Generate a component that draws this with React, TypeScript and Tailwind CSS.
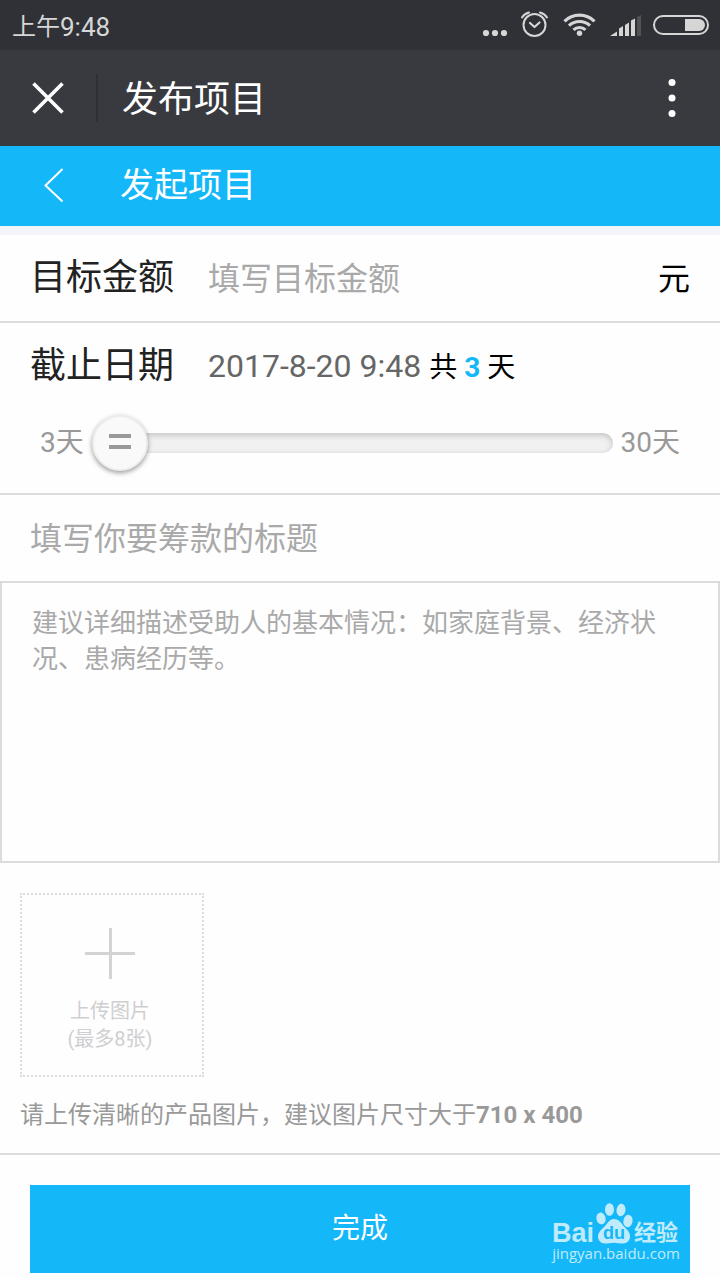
import { useState } from "react";

function StatusIcons() {
  return (
    <div className="flex items-center text-[#d6d6d6]">
      <svg width="228" height="32" viewBox="482 9 228 32" fill="currentColor" aria-hidden="true">
        <circle cx="486" cy="33" r="3.1" />
        <circle cx="495" cy="33" r="3.1" />
        <circle cx="504" cy="33" r="3.1" />
        <g fill="none" stroke="currentColor" strokeWidth="2" strokeLinecap="round" strokeLinejoin="round">
          <circle cx="534.5" cy="25" r="11" />
          <path d="M530 23l4.5 4 5-4.5" strokeWidth="2.2" />
          <path d="M522 17.500c1.500-2.500 4-4.300 7-5M547 17.500c-1.500-2.500-4-4.300-7-5" />
        </g>
        <g fill="none" stroke="currentColor" strokeWidth="3.200">
          <path d="M564.500 21.300c8.300-8.200 21.700-8.200 30 0" />
          <path d="M569 25.700c5.800-5.600 15.200-5.600 21 0" />
          <path d="M573.500 29.900c3.400-3.200 8.600-3.200 12 0" />
        </g>
        <circle cx="579.500" cy="33.300" r="2.700" />
        <path d="M610 36l7-4.500V36zM619 36v-7.500l4-2.500V36zM625 36V25l4-2.500V36zM631 36V20.500l4-2V36z" />
        <path d="M637 36V17l4-2v21z" opacity="0.2" />
        <rect x="654" y="16" width="54" height="18" rx="9" fill="none" stroke="currentColor" strokeWidth="2" />
        <path d="M685 19h14a6 6 0 0 1 0 12h-14z" />
      </svg>
    </div>
  );
}

function Watermark() {
  return (
    <span className="pointer-events-none absolute right-[10px] bottom-3 flex flex-col text-[#c0ebfd]" aria-hidden="true">
      <svg width="128" height="44" viewBox="552 1201 128 44" fill="currentColor" overflow="visible">
        <text x="552" y="1242" fontSize="27" fontWeight="700" fontFamily="Liberation Sans, sans-serif">Bai</text>
        <ellipse cx="601" cy="1218.500" rx="4.600" ry="6" transform="rotate(-12 601 1218.500)" />
        <ellipse cx="609.500" cy="1209.500" rx="4.500" ry="6.300" />
        <ellipse cx="621" cy="1210" rx="4.500" ry="6.300" transform="rotate(8 621 1210)" />
        <ellipse cx="628" cy="1221" rx="4.600" ry="6.200" transform="rotate(10 628 1221)" />
        <path d="M614 1219c5 0 7 4 10 7.500 4 4 6 6 6 10 0 4-3 7-7 7-3 0-6-.8-9-.8s-6 .8-9 .8c-4 0-7-3-7-7 0-4 3-6.500 7-10.500 3-3.500 5-7 9-7z" />
        <text x="614" y="1239" fontSize="18" fontWeight="700" textAnchor="middle" fill="#14b7f8" fontFamily="Liberation Sans, sans-serif">du</text>
        <text x="634" y="1240" fontSize="22" fontWeight="700" fontFamily="Noto Sans CJK SC, sans-serif">经验</text>
      </svg>
      <span className="font-['Open_Sans',sans-serif] text-[15px] leading-4">jingyan.baidu.com</span>
    </span>
  );
}

export default function App() {
  const [days, setDays] = useState(3);
  const end = new Date(2017, 7, 17 + days);
  const endText = `${end.getFullYear()}-${end.getMonth() + 1}-${end.getDate()} 9:48`;

  return (
    <div className="flex flex-col bg-[#fefefe] font-['Roboto','Noto_Sans_CJK_SC',sans-serif] text-black">
      <div className="flex h-[50px] items-center justify-between bg-[#303136] pr-2.5 pl-3 text-[#d6d6d6]">
        <div className="flex items-center pt-1 text-[26px] leading-8">
          <span className="text-2xl">上午</span>
          <span>9:48</span>
        </div>
        <StatusIcons />
      </div>

      <header className="flex h-24 items-center bg-[#393a3f] text-white">
        <button type="button" aria-label="关闭" className="flex h-12 w-[98px] items-center border-r-2 border-[#2f3034] pl-8">
          <svg width="32" height="32" viewBox="0 0 32 32" fill="none" stroke="currentColor" strokeWidth="3.600" aria-hidden="true">
            <path d="M1.500 1.500l29 29M30.500 1.500l-29 29" />
          </svg>
        </button>
        <h1 className="grow pt-1 pl-6 text-4xl">发布项目</h1>
        <button type="button" aria-label="更多" className="flex h-12 w-24 items-center justify-center">
          <svg width="8" height="40" viewBox="0 0 8 40" fill="currentColor" aria-hidden="true">
            <circle cx="4" cy="4.500" r="3.500" />
            <circle cx="4" cy="20" r="3.500" />
            <circle cx="4" cy="35.500" r="3.500" />
          </svg>
        </button>
      </header>

      <nav className="flex h-20 items-center bg-[#14b7f8] text-white">
        <button type="button" aria-label="返回" className="flex h-full w-[120px] items-center pl-11">
          <svg width="20" height="36" viewBox="0 0 20 36" fill="none" stroke="currentColor" strokeWidth="2" aria-hidden="true">
            <path d="M18.500 1L1.500 17.500l17 16" />
          </svg>
        </button>
        <h2 className="pb-0.5 text-[34px] leading-10">发起项目</h2>
      </nav>

      <form className="border-t-[9px] border-[#f3f5fa]" onSubmit={(e) => e.preventDefault()}>
        <div className="flex h-[88px] items-center border-b-2 border-[#dcdcdc] px-[30px]">
          <label htmlFor="amount" className="w-[178px] shrink-0 text-4xl text-[#222]">目标金额</label>
          <input id="amount" type="text" placeholder="填写目标金额" className="min-w-0 grow bg-transparent pt-0.5 text-[32px] leading-10 outline-none placeholder:text-[#a9a9a9]" />
          <span className="pt-0.5 text-[32px] leading-10">元</span>
        </div>

        <section className="h-[172px] border-b-2 border-[#dcdcdc]">
          <div className="flex h-[84px] items-center px-[30px] pt-0.5">
            <label htmlFor="days" className="w-[178px] shrink-0 text-4xl text-[#222]">截止日期</label>
            <output className="text-[32px] leading-10 text-[#666]">{endText}</output>
            <span className="pt-1 pl-2 text-[28px] leading-10">
              共 <b className="text-[#14b7f8]">{days}</b> 天
            </span>
          </div>
          <div className="flex h-[72px] items-center gap-2 px-10 text-[28px] leading-10 text-[#999]">
            <span>3天</span>
            <input
              id="days"
              type="range"
              min={3}
              max={30}
              value={days}
              onChange={(e) => setDays(Number(e.target.value))}
              className="h-5 min-w-0 grow appearance-none rounded-full bg-[#f1f1f1] shadow-[inset_0_2px_6px_rgba(0,0,0,0.2)] outline-none [&::-webkit-slider-thumb]:h-14 [&::-webkit-slider-thumb]:w-14 [&::-webkit-slider-thumb]:appearance-none [&::-webkit-slider-thumb]:rounded-full [&::-webkit-slider-thumb]:border-2 [&::-webkit-slider-thumb]:border-[#ededed] [&::-webkit-slider-thumb]:bg-[#f9f9f9] [&::-webkit-slider-thumb]:bg-[linear-gradient(#999,#999),linear-gradient(#999,#999)] [&::-webkit-slider-thumb]:bg-[length:22px_4px,22px_4px] [&::-webkit-slider-thumb]:bg-[position:15px_17px,15px_28px] [&::-webkit-slider-thumb]:bg-no-repeat [&::-webkit-slider-thumb]:shadow-[0_2px_5px_rgba(0,0,0,0.4)]"
            />
            <span>30天</span>
          </div>
        </section>

        <input type="text" aria-label="标题" placeholder="填写你要筹款的标题" className="block h-[86px] w-full bg-transparent px-[30px] pt-0.5 text-[32px] leading-10 outline-none placeholder:text-[#a9a9a9]" />

        <textarea
          aria-label="描述"
          placeholder="建议详细描述受助人的基本情况：如家庭背景、经济状况、患病经历等。"
          className="block h-[282px] w-full resize-none border-2 border-[#dcdcdc] bg-transparent px-[30px] py-[22px] text-[26px] leading-9 outline-none placeholder:text-[#a9a9a9]"
        />

        <section className="border-b-2 border-[#dcdcdc] px-5 pt-[30px] pb-5">
          <button type="button" className="flex h-[184px] w-[184px] flex-col items-center border-2 border-dotted border-[#dcdcdc] pt-8 pr-1 text-[#cfcfd1]">
            <svg width="52" height="52" viewBox="0 0 52 52" stroke="#d3d3d6" strokeWidth="3" aria-hidden="true">
              <path d="M26.500 1v51M1 26.500h50" />
            </svg>
            <span className="pt-[18px] text-xl leading-7">
              上传图片
              <br />
              (最多8张)
            </span>
          </button>
          <p className="pt-5 text-2xl leading-[36px] text-[#999]">
            请上传清晰的产品图片，建议图片尺寸大于<b>710 x 400</b>
          </p>
        </section>

        <div className="px-[30px] pt-[30px] pb-1">
          <button type="submit" className="relative h-[88px] w-full bg-[#14b7f8] text-[28px] text-white">
            完成
            <Watermark />
          </button>
        </div>
      </form>
    </div>
  );
}
